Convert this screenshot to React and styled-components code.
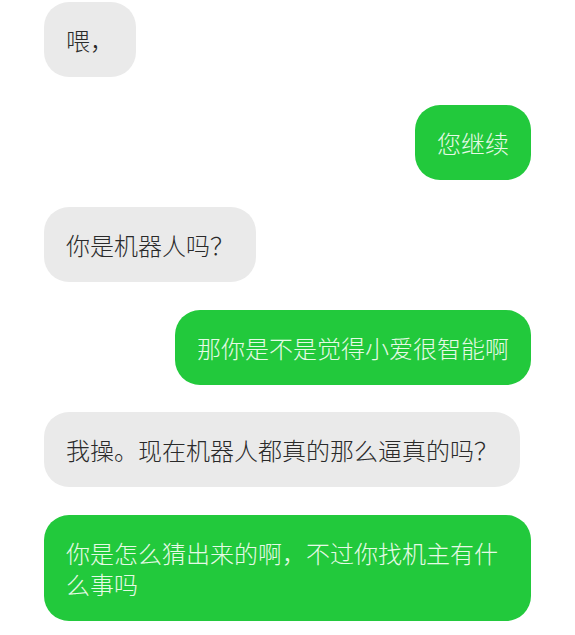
import React from "react";
import styled, { createGlobalStyle, css } from "styled-components";

const GlobalStyle = createGlobalStyle`
  html, body {
    margin: 0;
    padding: 0;
    background: #ffffff;
  }
  body {
    font-family: "Noto Sans CJK SC", "Noto Sans", sans-serif;
  }
`;

const Chat = styled.div`
  box-sizing: border-box;
  width: 575px;
  padding: 2px 44px 0 44px;
  display: flex;
  flex-direction: column;
  gap: 27.5px;
`;

const Bubble = styled.div`
  box-sizing: border-box;
  max-width: 488px;
  padding: 22px 22px;
  border-radius: 25px;
  font-size: 24px;
  font-weight: 300;
  line-height: 31px;
  letter-spacing: 0;
  word-break: break-all;
  ${(p) =>
    p.$mine
      ? css`
          align-self: flex-end;
          background: #22c93c;
          color: #e6fae6;
        `
      : css`
          align-self: flex-start;
          background: #eaeaea;
          color: #2a2a2a;
        `}
`;

const messages = [
  { mine: false, text: "喂，" },
  { mine: true, text: "您继续" },
  { mine: false, text: "你是机器人吗？" },
  { mine: true, text: "那你是不是觉得小爱很智能啊" },
  { mine: false, text: "我操。现在机器人都真的那么逼真的吗？" },
  { mine: true, text: "你是怎么猜出来的啊，不过你找机主有什么事吗" },
];

export default function App() {
  return (
    <>
      <GlobalStyle />
      <Chat>
        {messages.map((m, i) => (
          <Bubble key={i} $mine={m.mine}>
            {m.text}
          </Bubble>
        ))}
      </Chat>
    </>
  );
}
